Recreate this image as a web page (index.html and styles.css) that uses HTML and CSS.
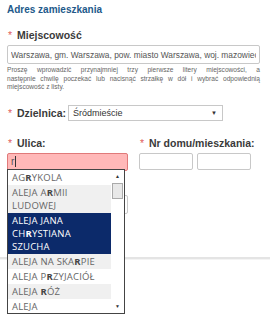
FILE: index.html
```html
<!DOCTYPE html>
<html lang="pl">
<head>
    <meta charset="UTF-8">
    <title>Adres zamieszkania</title>
    <link rel="stylesheet" href="styles.css">
</head>
<body>

<div class="form">
    <h2 class="title">Adres zamieszkania</h2>

    <div class="field">
        <label class="label"><span class="req">*</span> Miejscowość</label>
        <input type="text" class="text city" value="Warszawa, gm. Warszawa, pow. miasto Warszawa, woj. mazowieckie">
        <p class="hint">
            <span class="line">Proszę wprowadzić przynajmniej trzy pierwsze litery miejscowości, a</span>
            <span class="line">następnie chwilę poczekać lub nacisnąć strzałkę w dół i wybrać odpowiednią</span>
            <span class="line last">miejscowość z listy.</span>
        </p>
    </div>

    <div class="field inline">
        <label class="label"><span class="req">*</span> Dzielnica:</label>
        <div class="select">
            <span>Śródmieście</span>
            <span class="arrow">&#9660;</span>
        </div>
    </div>

    <div class="cols">
        <div class="col street">
            <label class="label"><span class="req">*</span> Ulica:</label>
            <div class="text error">r<span class="caret"></span></div>
            <div class="text behind"></div>

            <div class="suggest">
                <ul class="options">
                    <li>AG<b>R</b>YKOLA</li>
                    <li>ALEJA A<b>R</b>MII LUDOWEJ</li>
                    <li class="active">ALEJA JANA CH<b>R</b>YSTIANA SZUCHA</li>
                    <li>ALEJA NA SKA<b>R</b>PIE</li>
                    <li>ALEJA P<b>R</b>ZYJACIÓŁ</li>
                    <li>ALEJA <b>R</b>ÓŻ</li>
                    <li>ALEJA</li>
                </ul>
                <div class="scrollbar">
                    <span class="btn">&#9650;</span>
                    <span class="thumb"></span>
                    <span class="track"></span>
                    <span class="btn">&#9660;</span>
                </div>
            </div>
        </div>
        <div class="col house">
            <label class="label"><span class="req">*</span> Nr domu/mieszkania:</label>
            <div class="pair">
                <input type="text" class="text small">
                <input type="text" class="text small">
            </div>
        </div>
    </div>

    <div class="sep"></div>
</div>

</body>
</html>
```

FILE: styles.css
```css
body {
    margin: 0;
    min-height: 319px;
    background-color: #fff;
    font-family: "Liberation Sans", Arial, sans-serif;
}
.form {
    padding: 3px 10px 60px 7px;
}
.title {
    margin: 0 0 11px 0;
    font-size: 10px;
    line-height: 14px;
    color: #22598a;
}
.label {
    display: block;
    font-size: 10.5px;
    line-height: 14px;
    font-weight: bold;
    color: #3a3a3a;
    padding-left: 1px;
    white-space: nowrap;
}
.req {
    color: #e06060;
    font-weight: normal;
    margin-right: 2px;
}
.text {
    display: block;
    box-sizing: border-box;
    height: 19px;
    border: 1px solid #c8c8c8;
    border-radius: 2px;
    background-color: #fff;
    font-family: "Liberation Sans", Arial, sans-serif;
    font-size: 8.4px;
    color: #555;
    padding: 0 3px;
}
.city {
    width: 253px;
    margin-top: 3px;
}
.hint {
    margin: 2px 0 0 0;
    font-size: 6.6px;
    line-height: 8.5px;
    color: #666;
}
.hint .line {
    display: block;
    white-space: nowrap;
    text-align: justify;
    text-align-last: justify;
}
.hint .last {
    text-align-last: left;
}
.inline {
    display: flex;
    align-items: center;
    margin-top: 13px;
}
.inline .label {
    width: 60px;
}
.select {
    display: flex;
    justify-content: space-between;
    align-items: center;
    box-sizing: border-box;
    width: 155px;
    height: 16px;
    border: 1px solid #c8c8c8;
    font-size: 9px;
    color: #333;
    padding: 0 5px 0 4px;
}
.arrow {
    font-size: 6px;
    color: #333;
}
.cols {
    display: flex;
    margin-top: 15px;
}
.col {
    position: relative;
}
.street {
    width: 121px;
}
.house {
    margin-left: 11px;
}
.error {
    margin-top: 3px;
    height: 18px;
    background-color: #ffb8b8;
    border-color: #e07a7a;
    line-height: 16px;
    font-size: 10px;
}
.caret {
    display: inline-block;
    width: 1px;
    height: 11px;
    background-color: #333;
    vertical-align: -2px;
    margin-left: 1px;
}
.behind {
    margin-top: 24px;
    width: 121px;
}
.pair {
    display: flex;
    gap: 4px;
    margin-top: 3px;
}
.small {
    width: 54px;
    height: 17px;
}
.sep {
    margin: 43px -10px 0 -7px;
    height: 2px;
    background-color: #e4e4e4;
    border-bottom: 1px solid #f4f4f4;
}
.suggest {
    position: absolute;
    left: 0;
    top: 33px;
    width: 118px;
    height: 145px;
    box-sizing: border-box;
    border: 1px solid #444;
    background-color: #fff;
    display: flex;
    overflow: hidden;
    z-index: 2;
}
.options {
    list-style: none;
    margin: 0;
    padding: 0;
    flex: 1;
    font-family: "Open Sans", sans-serif;
    font-size: 9.5px;
    letter-spacing: 0.2px;
    line-height: 13px;
    color: #666;
}
.options li {
    padding: 1px 6px 1px 4px;
}
.options li:nth-child(even) {
    background-color: #f0f0f0;
}
.options b {
    color: #444;
}
.options li.active {
    background-color: #0c2a6a;
    color: #fff;
}
.options li.active b {
    color: #fff;
}
.scrollbar {
    width: 13px;
    display: flex;
    flex-direction: column;
    background-color: #fff;
}
.btn {
    height: 13px;
    font-size: 5px;
    line-height: 13px;
    text-align: center;
    color: #333;
}
.thumb {
    height: 14px;
    margin: 0 1px;
    border: 1px solid #aaa;
    background-color: #e8e8e8;
}
.track {
    flex: 1;
}
```
